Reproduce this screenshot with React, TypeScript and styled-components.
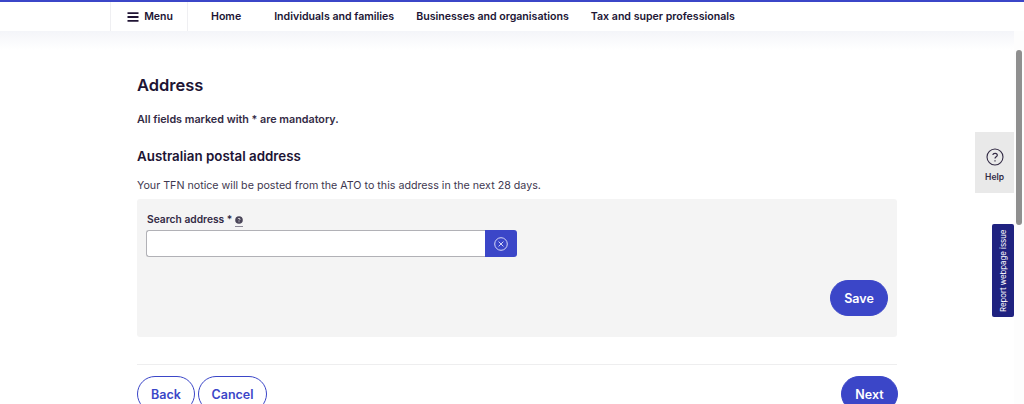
import React from "react";
import styled, { createGlobalStyle } from "styled-components";

const Global = createGlobalStyle`
  html, body { margin: 0; padding: 0; height: 404px; overflow: hidden; background: #fff; }
  body { font-family: Inter, "Liberation Sans", sans-serif; color: #201434; }
  * { box-sizing: border-box; }
`;

const Page = styled.div`
  position: relative;
  width: 1024px;
  height: 404px;
  overflow: hidden;
`;

const Header = styled.header`
  height: 31px;
  border-top: 2px solid #3b46c8;
  background: #fff;
  padding-left: 110px;
  display: flex;
  align-items: stretch;
`;

const ShadowBand = styled.div`
  height: 19px;
  background: linear-gradient(#f4f5f9, #ffffff);
`;

const MenuCell = styled.div`
  width: 78px;
  border-left: 1px solid #efeff2;
  border-right: 1px solid #efeff2;
  display: flex;
  align-items: center;
  justify-content: center;
  gap: 5px;
  font-size: 10.5px;
  font-weight: 600;
  padding-left: 2px;
`;

const NavItem = styled.div<{ $gap: number }>`
  margin-left: ${(p) => p.$gap}px;
  display: flex;
  align-items: center;
  flex: none;
  white-space: nowrap;
  font-size: 10.6px;
  font-weight: 600;
`;

const Main = styled.main`
  width: 760px;
  margin-left: 137px;
  padding-top: 17px;
`;

const Title = styled.h1`
  margin: 0;
  font-size: 16.5px;
  line-height: 36px;
  font-weight: 600;
`;

const Mandatory = styled.p`
  margin: 8px 0 0;
  font-size: 10.75px;
  line-height: 18px;
  font-weight: 600;
  color: #322a44;
`;

const SubTitle = styled.h2`
  margin: 17px 0 0;
  font-size: 13.35px;
  line-height: 20px;
  font-weight: 600;
`;

const Hint = styled.p`
  margin: 11px 0 0;
  font-size: 10.7px;
  line-height: 18px;
  color: #3e3850;
`;

const Panel = styled.section`
  margin-top: 4px;
  height: 138px;
  background: #f4f4f4;
  border-radius: 3px;
  padding: 12px 9px 21px 9px;
  display: flex;
  flex-direction: column;
`;

const LabelRow = styled.div`
  display: flex;
  align-items: center;
  gap: 3px;
  height: 16px;
  padding-left: 1px;
  font-size: 10.25px;
  font-weight: 600;
  color: #322a44;
`;

const InfoMark = styled.span`
  display: flex;
  border-bottom: 1px solid #8b8896;
  padding: 2px 0 2px;
  margin-top: 3px;
`;

const SearchRow = styled.div`
  display: flex;
  margin-top: 3px;
  height: 27px;
  width: 371px;
`;

const SearchInput = styled.input`
  width: 339px;
  height: 27px;
  border: 1px solid #b1b1b6;
  border-right: none;
  border-radius: 3px 0 0 3px;
  background: #fff;
  outline: none;
`;

const ClearButton = styled.button`
  width: 32px;
  height: 27px;
  padding: 0;
  border: none;
  border-radius: 0 3px 3px 0;
  background: #3b46c8;
  display: flex;
  align-items: center;
  justify-content: center;
`;

const PanelActions = styled.div`
  margin-top: auto;
  display: flex;
  justify-content: flex-end;
`;

const Pill = styled.button<{ $outline?: boolean; $w: number }>`
  width: ${(p) => p.$w}px;
  height: 36px;
  flex: none;
  border-radius: 18px;
  border: 1px solid #3b46c8;
  background: ${(p) => (p.$outline ? "#fff" : "#3b46c8")};
  color: ${(p) => (p.$outline ? "#3b46c8" : "#fff")};
  font-family: inherit;
  font-size: 12.5px;
  font-weight: 600;
  padding: 0;
`;

const Divider = styled.hr`
  margin: 27px 0 11px;
  border: none;
  border-top: 1px solid #eeeeef;
`;

const Actions = styled.div`
  display: flex;
  gap: 3px;
  margin-right: -1px;
`;

const Spacer = styled.div`
  flex: 1;
`;

const HelpTab = styled.div`
  position: absolute;
  left: 975px;
  top: 132px;
  width: 39px;
  height: 61px;
  background: #e9e9e9;
  display: flex;
  flex-direction: column;
  align-items: center;
  padding-top: 16px;
  gap: 6px;
  font-size: 8.5px;
  font-weight: 600;
  color: #322a44;
`;

const ReportTab = styled.div`
  position: absolute;
  left: 992px;
  top: 224px;
  width: 22px;
  height: 93px;
  background: #1f2280;
  border-radius: 2px;
  color: #fff;
  font-size: 7.8px;
  display: flex;
  align-items: center;
  justify-content: center;
  writing-mode: vertical-rl;
  transform: rotate(180deg);
  white-space: nowrap;
`;

const ScrollTrack = styled.div`
  position: absolute;
  right: 0;
  top: 31px;
  bottom: 0;
  width: 10px;
  background: #fdfdfd;
`;

const ScrollThumb = styled.div`
  position: absolute;
  left: 2px;
  top: 19px;
  width: 6px;
  height: 175px;
  border-radius: 3px;
  background: #8f8f8f;
`;

export default function App() {
  return (
    <Page>
      <Global />
      <Header>
        <MenuCell>
          <svg width="12" height="10" viewBox="0 0 12 10" aria-hidden="true">
            <path d="M.5 1.2h11M.5 5h11M.5 8.8h11" stroke="#201434" strokeWidth="1.8" fill="none" />
          </svg>
          Menu
        </MenuCell>
        <NavItem $gap={23}>Home</NavItem>
        <NavItem $gap={33}>Individuals and families</NavItem>
        <NavItem $gap={22}>Businesses and organisations</NavItem>
        <NavItem $gap={22}>Tax and super professionals</NavItem>
      </Header>
      <ShadowBand />
      <Main>
        <Title>Address</Title>
        <Mandatory>All fields marked with * are mandatory.</Mandatory>
        <SubTitle>Australian postal address</SubTitle>
        <Hint>Your TFN notice will be posted from the ATO to this address in the next 28 days.</Hint>
        <Panel>
          <LabelRow>
            Search address *
            <InfoMark>
              <svg width="8" height="8" viewBox="0 0 8 8" aria-hidden="true">
                <circle cx="4" cy="4" r="3.8" fill="#4a4558" />
                <path d="M2.9 3.1c.2-1 2.2-1 2.2.1 0 .7-1.1.6-1.1 1.3M4 5.4v.8" stroke="#fff" strokeWidth=".8" fill="none" />
              </svg>
            </InfoMark>
          </LabelRow>
          <SearchRow>
            <SearchInput aria-label="Search address" />
            <ClearButton aria-label="Clear">
              <svg width="14" height="14" viewBox="0 0 14 14" aria-hidden="true">
                <circle cx="7" cy="7" r="6.3" fill="none" stroke="#e6e7fa" strokeWidth="0.9" />
                <path d="M4.6 4.6l4.8 4.8M9.4 4.6l-4.8 4.8" stroke="#e6e7fa" strokeWidth="0.9" />
              </svg>
            </ClearButton>
          </SearchRow>
          <PanelActions>
            <Pill $w={58}>Save</Pill>
          </PanelActions>
        </Panel>
        <Divider />
        <Actions>
          <Pill $outline $w={58}>Back</Pill>
          <Pill $outline $w={69}>Cancel</Pill>
          <Spacer />
          <Pill $w={57}>Next</Pill>
        </Actions>
      </Main>
      <HelpTab>
        <svg width="18" height="18" viewBox="0 0 18 18" aria-hidden="true">
          <circle cx="9" cy="9" r="8" fill="none" stroke="#322a44" strokeWidth="1.1" />
          <path d="M6.8 7c.3-2.3 4.5-2.2 4.5.2 0 1.7-2.3 1.6-2.3 3.4M9 12.3v1.2" fill="none" stroke="#322a44" strokeWidth="1.2" />
        </svg>
        Help
      </HelpTab>
      <ReportTab>Report webpage issue</ReportTab>
      <ScrollTrack>
        <ScrollThumb />
      </ScrollTrack>
    </Page>
  );
}
